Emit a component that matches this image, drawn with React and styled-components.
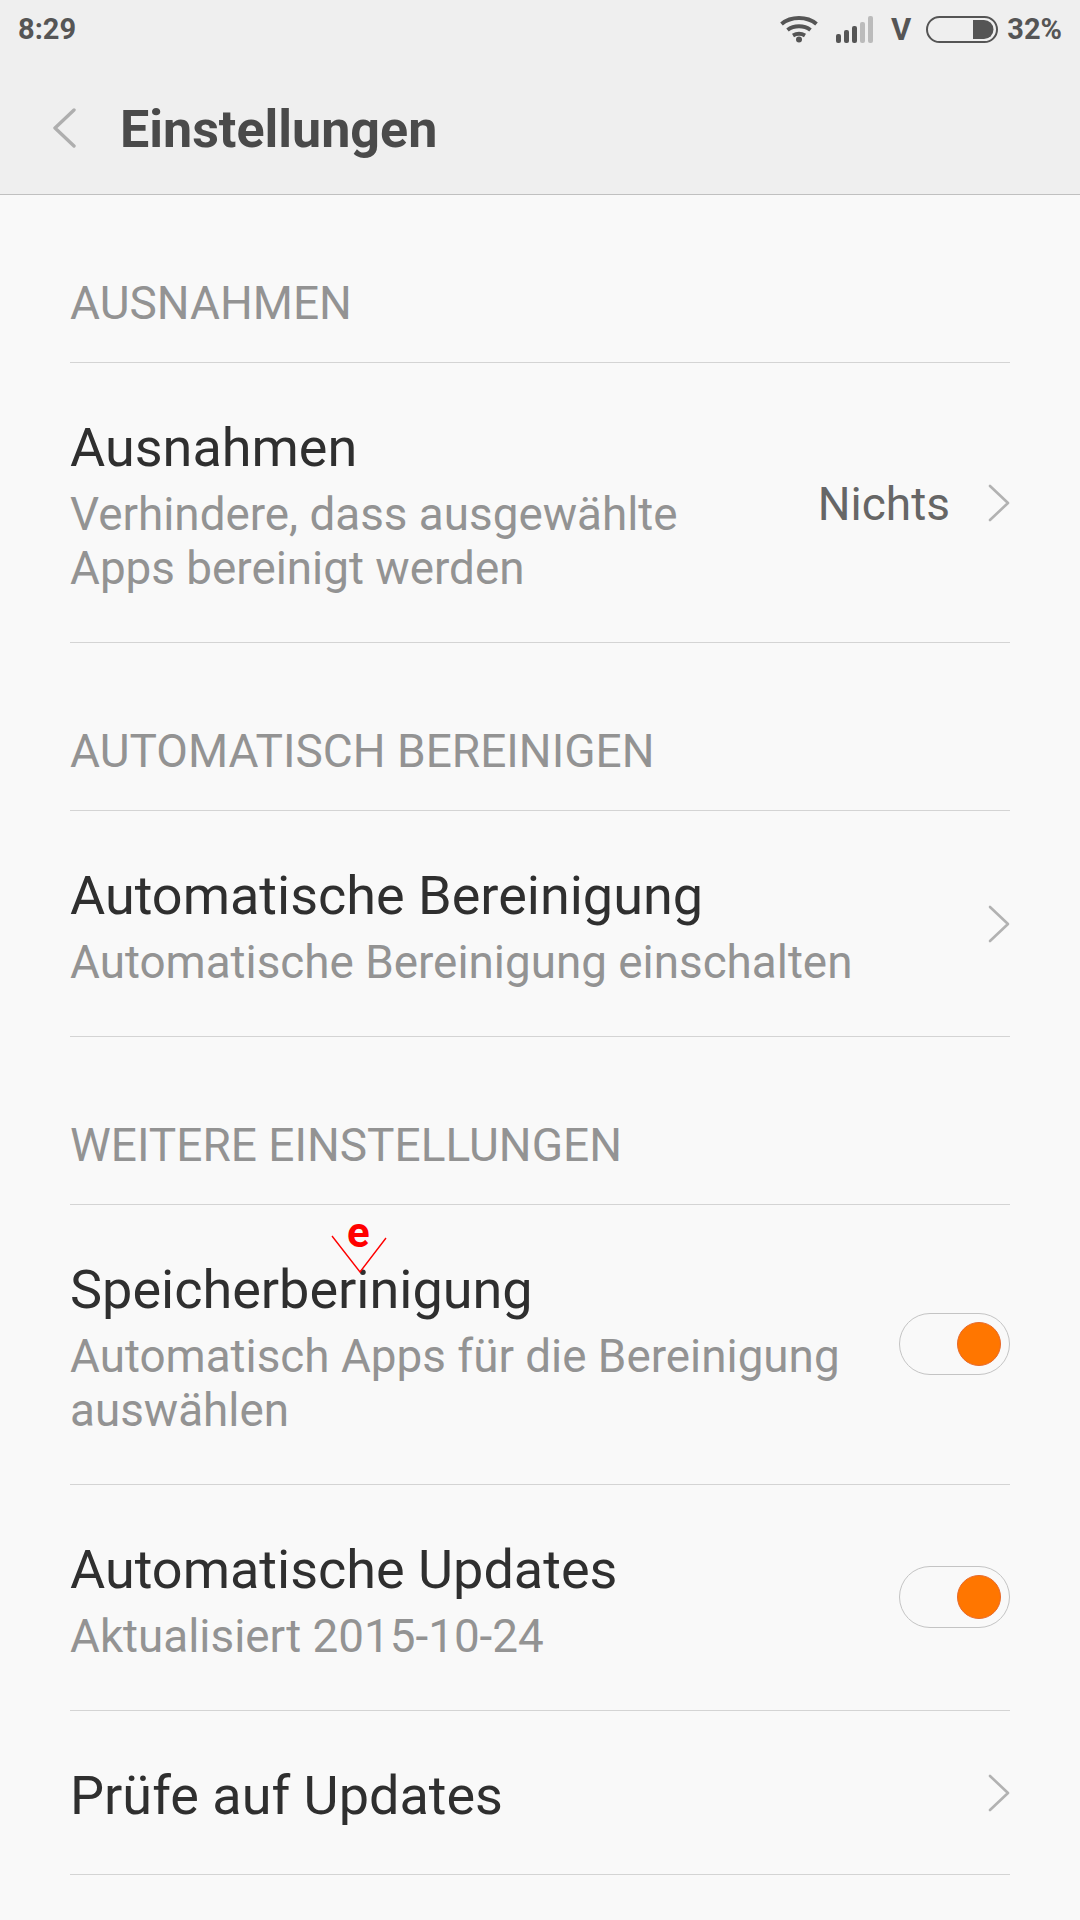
import React from "react";
import styled, { createGlobalStyle } from "styled-components";

const GlobalStyle = createGlobalStyle`
  html, body {
    margin: 0;
    padding: 0;
    background: #f9f9f9;
  }
  body {
    font-family: Roboto, "Noto Sans", sans-serif;
  }
`;

const sections = [
  {
    title: "AUSNAHMEN",
    rows: [
      {
        title: "Ausnahmen",
        sub: ["Verhindere, dass ausgewählte", "Apps bereinigt werden"],
        value: "Nichts",
        chevron: true,
      },
    ],
  },
  {
    title: "AUTOMATISCH BEREINIGEN",
    rows: [
      {
        title: "Automatische Bereinigung",
        sub: ["Automatische Bereinigung einschalten"],
        chevron: true,
      },
    ],
  },
  {
    title: "WEITERE EINSTELLUNGEN",
    rows: [
      {
        title: "Speicherberinigung",
        sub: ["Automatisch Apps für die Bereinigung", "auswählen"],
        toggle: true,
        mark: true,
      },
      {
        title: "Automatische Updates",
        sub: ["Aktualisiert 2015-10-24"],
        toggle: true,
      },
      { title: "Prüfe auf Updates", chevron: true },
    ],
  },
];

const Chevron = () => (
  <ChevronSvg viewBox="0 0 22 38">
    <path d="M2 2 L20 19 L2 36" fill="none" stroke="#b2b2b2" strokeWidth="2.6" strokeLinecap="round" strokeLinejoin="round" />
  </ChevronSvg>
);

const WifiIcon = () => (
  <svg width="38" height="28" viewBox="0 0 38 28">
    <g fill="none" stroke="#555" strokeWidth="4">
      <path d="M1.500 9 C11 1 27 1 36.500 9" />
      <path d="M7.500 15 C14 10 24 10 30.500 15" />
      <path d="M13 20.500 C16.500 18.500 21.500 18.500 25 20.500" />
    </g>
    <circle cx="19" cy="24.500" r="3" fill="#555" />
  </svg>
);

const SignalIcon = () => (
  <svg width="37" height="27" viewBox="0 0 37 27">
    <rect x="0" y="18" width="5" height="9" rx="2" fill="#555" />
    <rect x="8" y="14" width="5" height="13" rx="2" fill="#555" />
    <rect x="16" y="10" width="5" height="17" rx="2" fill="#555" />
    <rect x="24" y="6" width="5" height="21" rx="2" fill="#bbb" />
    <rect x="32" y="0" width="5" height="27" rx="2" fill="#bbb" />
  </svg>
);

const BatteryIcon = () => (
  <svg width="72" height="27" viewBox="0 0 72 27">
    <rect x="1" y="1" width="70" height="25" rx="12.500" fill="none" stroke="#555" strokeWidth="2" />
    <path d="M47 4 H58 A9.500 9.500 0 0 1 58 23 H47 Z" fill="#555" />
  </svg>
);

const Row = ({ row }) => (
  <RowBox>
    <RowText>
      <RowTitle>{row.title}</RowTitle>
      {row.sub && (
        <RowSub>
          {row.sub.map((line) => (
            <div key={line}>{line}</div>
          ))}
        </RowSub>
      )}
    </RowText>
    {row.value && <RowValue>{row.value}</RowValue>}
    {row.chevron && <Chevron />}
    {row.toggle && (
      <Toggle>
        <Knob />
      </Toggle>
    )}
    {row.mark && (
      <Mark>
        <MarkLetter>e</MarkLetter>
        <svg width="56" height="38" viewBox="0 0 56 38">
          <path d="M1 1 L29 37 L55 3" fill="none" stroke="#f00" strokeWidth="1.4" />
        </svg>
      </Mark>
    )}
  </RowBox>
);

export default function App() {
  return (
    <Page>
      <GlobalStyle />
      <Top>
        <StatusBar>
          <StatusTime>8:29</StatusTime>
          <StatusIcons>
            <WifiIcon />
            <SignalIcon />
            <NetLetter>V</NetLetter>
            <BatteryIcon />
            <StatusPercent>32%</StatusPercent>
          </StatusIcons>
        </StatusBar>
        <TitleBar>
          <svg width="24" height="40" viewBox="0 0 24 40">
            <path d="M22 2 L3 20 L22 38" fill="none" stroke="#aeaeae" strokeWidth="3.4" strokeLinecap="round" strokeLinejoin="round" />
          </svg>
          <PageTitle>Einstellungen</PageTitle>
        </TitleBar>
      </Top>
      <List>
        {sections.map((section) => (
          <section key={section.title}>
            <SectionTitle>{section.title}</SectionTitle>
            {section.rows.map((row) => (
              <Row key={row.title} row={row} />
            ))}
          </section>
        ))}
      </List>
    </Page>
  );
}

const Page = styled.div`
  width: 1080px;
  height: 1920px;
  overflow: hidden;
  background: #f9f9f9;
`;
const Top = styled.header`
  height: 194px;
  background: #efefef;
  border-bottom: 1px solid #c0c0c0;
`;
const StatusBar = styled.div`
  height: 58px;
  padding: 0 18px 0 18px;
  display: flex;
  align-items: center;
  justify-content: space-between;
  color: #555;
  font-size: 29px;
  font-weight: 500;
`;
const StatusTime = styled.span`
  font-weight: 700;
`;
const StatusIcons = styled.div`
  display: flex;
  align-items: center;
  gap: 18px;
`;
const NetLetter = styled.span`
  margin-right: -3px;
  font-weight: 700;
  font-size: 31px;
`;
const StatusPercent = styled.span`
  font-weight: 700;
  margin-left: -9px;
`;
const TitleBar = styled.div`
  height: 136px;
  padding: 4px 0 0 52px;
  box-sizing: border-box;
  display: flex;
  align-items: center;
  gap: 44px;
`;
const PageTitle = styled.h1`
  margin: 2px 0 0;
  font-size: 52px;
  font-weight: 700;
  color: #4a4a4a;
`;
const List = styled.main`
  padding: 0 70px;
`;
const SectionTitle = styled.h2`
  margin: 0;
  height: 168px;
  box-sizing: border-box;
  padding-top: 84px;
  font-size: 46px;
  line-height: 48px;
  font-weight: 400;
  color: #939393;
  border-bottom: 1px solid #d4d4d4;
`;
const RowBox = styled.div`
  position: relative;
  box-sizing: border-box;
  min-height: 164px;
  display: flex;
  align-items: center;
  border-bottom: 1px solid #d4d4d4;
`;
const RowText = styled.div`
  flex: 1;
  min-width: 0;
  align-self: flex-start;
  padding: 54px 0 46px;
`;
const RowTitle = styled.div`
  font-size: 54px;
  line-height: 61px;
  color: #2f2f2f;
`;
const RowSub = styled.div`
  margin-top: 10px;
  font-size: 45.8px;
  line-height: 54px;
  color: #939393;
`;
const RowValue = styled.span`
  margin: 3px 38px 0 0;
  font-size: 46px;
  color: #666;
`;
const ChevronSvg = styled.svg`
  width: 22px;
  height: 38px;
`;
const Toggle = styled.div`
  width: 111px;
  height: 62px;
  margin-top: -2px;
  box-sizing: border-box;
  border: 1px solid #c4c4c4;
  border-radius: 31px;
  display: flex;
  align-items: center;
  justify-content: flex-end;
  padding-right: 8px;
`;
const Knob = styled.div`
  width: 44px;
  height: 44px;
  box-sizing: border-box;
  border-radius: 50%;
  background: #ff7600;
  border: 1px solid #e8692a;
`;
const Mark = styled.div`
  position: absolute;
  left: 261px;
  top: 14px;
  width: 56px;
  height: 60px;
  pointer-events: none;
  svg {
    position: absolute;
    left: 0;
    top: 16px;
  }
`;
const MarkLetter = styled.span`
  position: absolute;
  left: 16px;
  top: -10px;
  font-size: 42px;
  line-height: 48px;
  font-weight: 700;
  color: #f00;
`;
